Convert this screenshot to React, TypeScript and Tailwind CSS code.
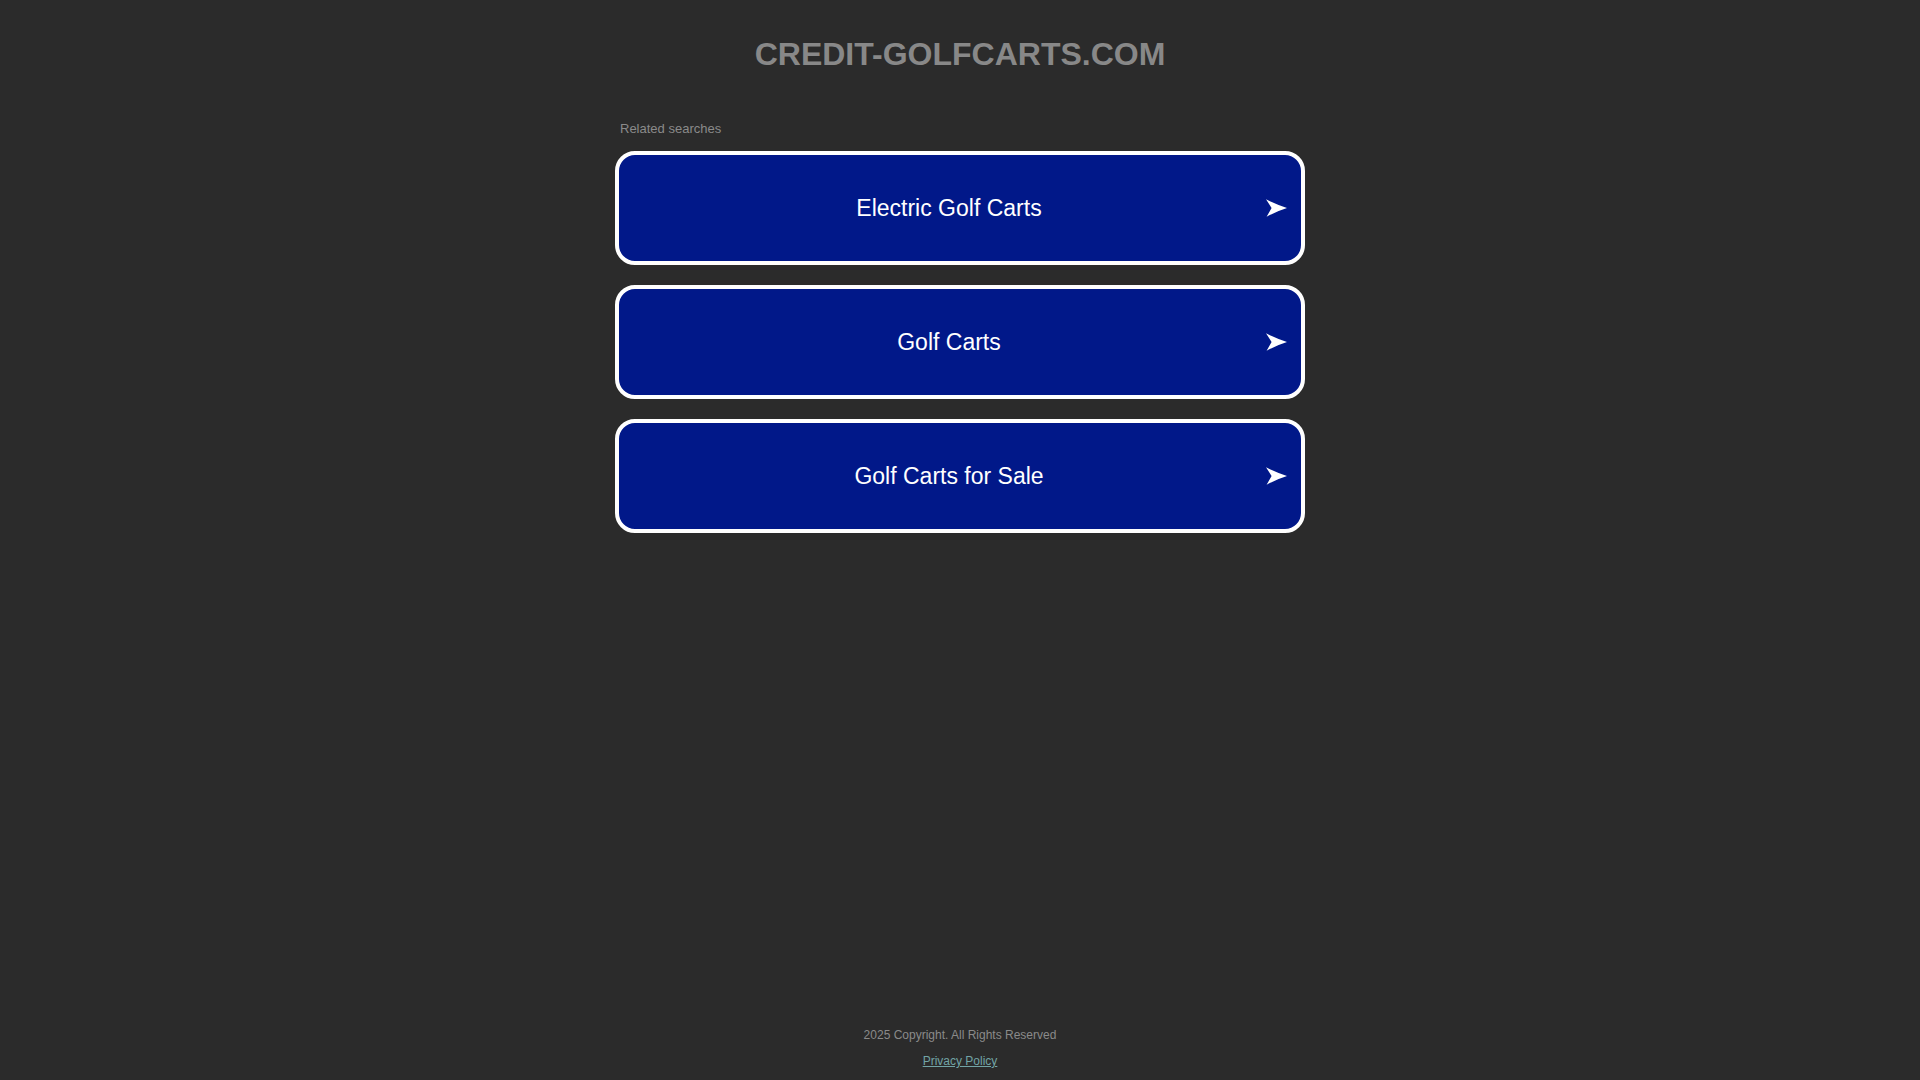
const searches = ['Electric Golf Carts', 'Golf Carts', 'Golf Carts for Sale'];

function Arrow() {
  return (
    <svg width="21" height="18" viewBox="0 0 21 18" className="absolute right-[14px] top-1/2 -translate-y-1/2">
      <path d="M0 0.3 Q10 5.5 21 9 Q10 12.5 0.6 17.7 L5.6 9 Z" fill="#ffffff" />
    </svg>
  );
}

export default function App() {
  return (
    <div className="min-h-screen flex flex-col bg-[#2b2b2b] font-['Liberation_Sans',Arial,sans-serif]">
      <header className="pt-[34px] text-center">
        <h1 className="text-[32px] leading-[40px] font-bold text-[#888888]">CREDIT-GOLFCARTS.COM</h1>
      </header>

      <main className="w-[690px] mx-auto mt-[47px]">
        <p className="pl-[5px] text-[13px] leading-[16px] text-[#8a8a8a]">Related searches</p>
        <div className="mt-[14px] flex flex-col gap-[20px]">
          {searches.map((s) => (
            <a
              key={s}
              href="#"
              className="relative flex items-center h-[114px] rounded-[20px] border-4 border-white bg-[#011889] pr-[22px]"
            >
              <span className="flex-1 text-center text-[23px] leading-[28px] text-white">{s}</span>
              <Arrow />
            </a>
          ))}
        </div>
      </main>

      <footer className="mt-auto pb-[11px] flex flex-col items-center gap-[10px] text-[12px] leading-[16px]">
        <p className="text-[#8a8a8a]">2025 Copyright. All Rights Reserved</p>
        <a href="#" className="underline text-[#72a4a6]">Privacy Policy</a>
      </footer>
    </div>
  );
}
